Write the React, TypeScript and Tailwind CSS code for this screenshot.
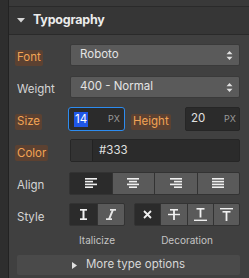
import React from "react";

const font = { fontFamily: "Inter, 'Noto Sans', sans-serif" };

function Updown() {
  return (
    <svg width="7" height="9" viewBox="0 0 7 9" className="shrink-0">
      <path d="M3.5 0 L6.5 3.2 H0.5 Z M0.5 5.8 H6.5 L3.5 9 Z" fill="#e0e0e0" />
    </svg>
  );
}

function Label({ children, hl }: { children: React.ReactNode; hl?: boolean }) {
  if (hl)
    return (
      <span className="inline-flex h-[16px] items-center rounded-[2px] bg-[#5c4131] px-[2px] text-[11.5px] text-[#f2a455]">
        {children}
      </span>
    );
  return <span className="pl-[2px] text-[11.5px] text-[#d4d4d4]">{children}</span>;
}

function Select({ value }: { value: string }) {
  return (
    <div className="flex h-[22px] flex-1 items-center justify-between rounded-[2px] border border-[#3a3a3a] bg-[#5a5a5a] pl-[9px] pr-[6px] text-[11.5px] text-[#e4e4e4]">
      <span>{value}</span>
      <Updown />
    </div>
  );
}

function AlignIcon({ kind }: { kind: "l" | "c" | "r" | "j" }) {
  const ys = [0, 2.8, 5.6, 8.4];
  const rects = ys.map((y, i) => {
    const full = i % 2 === 0 || kind === "j";
    const w = full ? 12 : 8;
    const x = full ? 0 : kind === "l" ? 0 : kind === "c" ? 2 : 4;
    return <rect key={i} x={x} y={y} width={w} height={1.6} fill="#f0f0f0" />;
  });
  return (
    <svg width="12" height="10" viewBox="0 0 12 10">
      {rects}
    </svg>
  );
}

export default function App() {
  return (
    <div className="flex h-[278px] w-[249px] overflow-hidden bg-[#404040]" style={font}>
      <div className="w-[9px] shrink-0 border-r border-[#222] bg-[#2e2e2e]" />
      <div className="flex min-w-0 flex-1 flex-col">
        <div className="h-[7px] shrink-0 border-b border-[#2a2a2a] bg-[#393939]" />
        <div className="flex h-[28px] shrink-0 items-center border-b border-[#2a2a2a] bg-[#363636] pl-[8px]">
          <svg width="8" height="5" viewBox="0 0 8 5">
            <path d="M0 0 H8 L4 4.5 Z" fill="#d6d6d6" />
          </svg>
          <span className="ml-[8px] text-[12.5px] font-bold tracking-[-0.2px] text-[#ececec]">Typography</span>
        </div>

        <div className="flex flex-col pl-[6px] pr-[9px] pt-[9px]">
          {/* Font */}
          <div className="flex h-[22px] items-center">
            <div className="w-[55px] shrink-0">
              <Label hl>Font</Label>
            </div>
            <Select value="Roboto" />
          </div>
          {/* Weight */}
          <div className="mt-[10px] flex h-[22px] items-center">
            <div className="w-[55px] shrink-0">
              <Label>Weight</Label>
            </div>
            <Select value="400 - Normal" />
          </div>
          {/* Size / Height */}
          <div className="mt-[9px] flex h-[24px] items-center">
            <div className="w-[53px] shrink-0">
              <Label hl>Size</Label>
            </div>
            <div className="flex h-[24px] w-[57px] items-center justify-between rounded-[3px] border border-[#2d8cf0] bg-[#2b2b2b] pl-[5px] pr-[4px]">
              <span className="bg-[#1f56e8] px-[1px] text-[11.5px] leading-[15px] text-white">14</span>
              <span className="text-[9px] text-[#9a9a9a]">PX</span>
            </div>
            <div className="ml-[6px]">
              <Label hl>Height</Label>
            </div>
            <div className="flex-1" />
            <div className="flex h-[24px] w-[55px] items-center justify-between rounded-[2px] border border-[#262626] bg-[#2b2b2b] pl-[5px] pr-[3px]">
              <span className="text-[11.5px] text-[#e0e0e0]">20</span>
              <span className="text-[9px] text-[#9a9a9a]">PX</span>
            </div>
          </div>
          {/* Color */}
          <div className="mt-[8px] flex h-[23px] items-center">
            <div className="w-[55px] shrink-0">
              <Label hl>Color</Label>
            </div>
            <div className="flex h-[23px] flex-1 items-center rounded-[2px] border border-[#262626] bg-[#2b2b2b]">
              <div className="h-full w-[22px] border-r border-[#222] bg-[#333]" />
              <span className="ml-[6px] text-[11.5px] text-[#e0e0e0]">#333</span>
            </div>
          </div>
          {/* Align */}
          <div className="mt-[10px] flex h-[22px] items-center">
            <div className="w-[54px] shrink-0">
              <Label>Align</Label>
            </div>
            <div className="flex h-[23px] flex-1 gap-px overflow-hidden rounded-[2px] border border-[#333] bg-[#333]">
              <div className="flex flex-1 items-center justify-center bg-[#2b2b2b]">
                <AlignIcon kind="l" />
              </div>
              <div className="flex flex-1 items-center justify-center bg-[#5a5a5a]">
                <AlignIcon kind="c" />
              </div>
              <div className="flex flex-1 items-center justify-center bg-[#5a5a5a]">
                <AlignIcon kind="r" />
              </div>
              <div className="flex flex-1 items-center justify-center bg-[#5a5a5a]">
                <AlignIcon kind="j" />
              </div>
            </div>
          </div>
          {/* Style */}
          <div className="mt-[9px] flex h-[23px] items-center">
            <div className="w-[54px] shrink-0">
              <Label>Style</Label>
            </div>
            <div className="flex h-[23px] w-[56px] gap-px overflow-hidden rounded-[2px] border border-[#333] bg-[#333]">
              <div className="flex flex-1 items-center justify-center bg-[#2b2b2b]">
                <svg width="7" height="11" viewBox="0 0 7 11">
                  <rect x="0" y="0" width="7" height="1.7" fill="#f0f0f0" />
                  <rect x="2.5" y="0" width="2" height="11" fill="#f0f0f0" />
                  <rect x="0" y="9.3" width="7" height="1.7" fill="#f0f0f0" />
                </svg>
              </div>
              <div className="flex flex-1 items-center justify-center bg-[#5a5a5a]">
                <svg width="10" height="11" viewBox="0 0 10 11">
                  <rect x="4" y="0" width="6" height="1.7" fill="#e6e6e6" />
                  <path d="M6.2 0 H8.3 L3.8 11 H1.7 Z" fill="#e6e6e6" />
                  <rect x="0" y="9.3" width="6" height="1.7" fill="#e6e6e6" />
                </svg>
              </div>
            </div>
            <div className="w-[9px]" />
            <div className="flex h-[23px] flex-1 gap-px overflow-hidden rounded-[2px] border border-[#333] bg-[#333]">
              <div className="flex flex-1 items-center justify-center bg-[#2b2b2b]">
                <svg width="9" height="9" viewBox="0 0 9 9">
                  <path d="M1 1 L8 8 M8 1 L1 8" stroke="#f0f0f0" strokeWidth="1.8" />
                </svg>
              </div>
              <div className="flex flex-1 items-center justify-center bg-[#5a5a5a]">
                <svg width="12" height="11" viewBox="0 0 12 11">
                  <rect x="2" y="0" width="8" height="1.6" fill="#f0f0f0" />
                  <rect x="5.1" y="0" width="1.8" height="11" fill="#f0f0f0" />
                  <rect x="0" y="4.8" width="12" height="1.4" fill="#f0f0f0" />
                </svg>
              </div>
              <div className="flex flex-1 items-center justify-center bg-[#5a5a5a]">
                <svg width="13" height="13" viewBox="0 0 13 13">
                  <rect x="2.5" y="0" width="8" height="1.6" fill="#f0f0f0" />
                  <rect x="5.6" y="0" width="1.8" height="9.5" fill="#f0f0f0" />
                  <rect x="0" y="11.6" width="13" height="1.4" fill="#f0f0f0" />
                </svg>
              </div>
              <div className="flex flex-1 items-center justify-center bg-[#5a5a5a]">
                <svg width="13" height="13" viewBox="0 0 13 13">
                  <rect x="0" y="0" width="13" height="1.4" fill="#f0f0f0" />
                  <rect x="2.5" y="3" width="8" height="1.6" fill="#f0f0f0" />
                  <rect x="5.6" y="3" width="1.8" height="10" fill="#f0f0f0" />
                </svg>
              </div>
            </div>
          </div>
          {/* captions */}
          <div className="mt-[7px] flex h-[14px] items-center text-[10px] text-[#c4c4c4]">
            <div className="w-[54px] shrink-0" />
            <div className="w-[56px] text-center">Italicize</div>
            <div className="w-[9px]" />
            <div className="flex-1 text-center">Decoration</div>
          </div>
          {/* More */}
          <div className="ml-[2px] mt-[8px] flex h-[20px] items-center justify-center rounded-[2px] bg-[#4a4a4a]">
            <svg width="5" height="7" viewBox="0 0 5 7">
              <path d="M0 0 L5 3.5 L0 7 Z" fill="#e0e0e0" />
            </svg>
            <span className="ml-[9px] text-[11.5px] text-[#d8d8d8]">More type options</span>
          </div>
        </div>
      </div>
    </div>
  );
}
